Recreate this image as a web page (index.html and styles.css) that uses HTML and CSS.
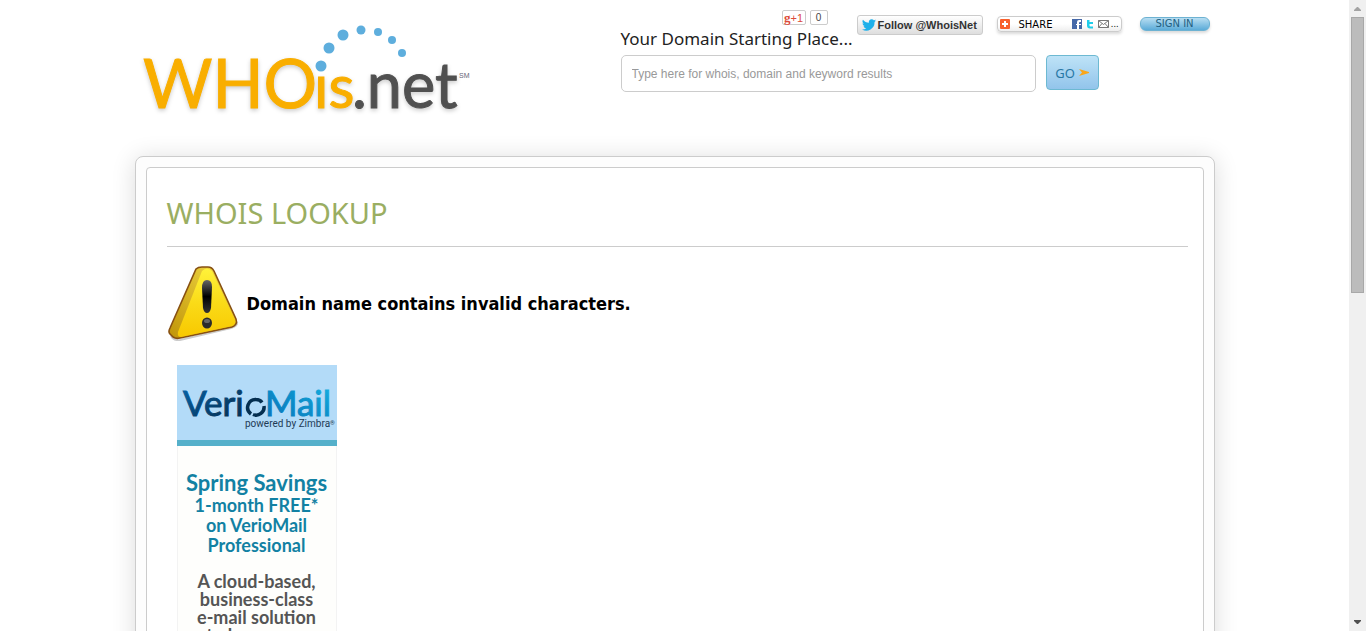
FILE: index.html
```html
<!DOCTYPE html>
<html lang="en">
<head>
<meta charset="utf-8">
<title>WHOis.net - Whois Lookup</title>
<link rel="stylesheet" href="styles.css">
</head>
<body>
<div class="shell">
  <div class="page">
    <div class="wrap">
      <header class="header">
        <a class="logo" href="#" aria-label="WHOis.net">
          <svg width="340" height="104" viewBox="0 0 340 104">
            <g class="logo-text">
              <g class="logo-gold">
                <text x="8" y="87" font-size="67">WHO</text>
                <text x="179" y="87" font-size="60">ıs</text>
              </g>
              <g class="logo-grey">
                <text x="217" y="87" font-size="63">.net</text>
              </g>
            </g>
            <text class="logo-mark" x="324" y="57">SM</text>
            <g fill="#5eaedd">
              <circle cx="186" cy="45" r="5.5"/>
              <circle cx="194" cy="27" r="5.5"/>
              <circle cx="208" cy="14" r="5.5"/>
              <circle cx="226" cy="9" r="4.5"/>
              <circle cx="243" cy="11" r="4"/>
              <circle cx="257" cy="19" r="4"/>
              <circle cx="267" cy="32" r="4"/>
            </g>
          </svg>
        </a>
        <div class="tools">
          <div class="top">
            <div class="intro">
              <div class="plus">
                <button class="plus-btn" type="button"><b>g</b>+1</button>
                <span class="plus-count">0</span>
              </div>
              <label class="tagline" for="q">Your Domain Starting Place...</label>
            </div>
            <a class="follow" href="#">
              <svg width="14" height="12" viewBox="0 0 24 20"><path fill="#1eb0ea" d="M24 2.4c-.9.4-1.800.7-2.800.8 1-.6 1.800-1.600 2.200-2.700-1 .6-2 1-3.100 1.200A4.900 4.900 0 0 0 11.900 6.200C7.800 6 4.200 4 1.700 1a4.900 4.900 0 0 0 1.500 6.600c-.8 0-1.600-.2-2.200-.6 0 2.300 1.500 4.400 3.900 4.900-.7.200-1.500.2-2.200.1.600 2 2.400 3.400 4.600 3.400A9.900 9.900 0 0 1 0 17.500 14 14 0 0 0 21.500 5c1-.7 1.800-1.600 2.500-2.600z"/></svg>
              <span>Follow @WhoisNet</span>
            </a>
            <a class="share" href="#">
              <svg width="10" height="10" viewBox="0 0 10 10"><rect width="10" height="10" rx="1" fill="#f8602c"/><path d="M4 2h2v2h2v2H6v2H4V6H2V4h2z" fill="#fff"/></svg>
              <span class="share-label">SHARE</span>
              <svg width="10" height="10" viewBox="0 0 10 10"><rect width="10" height="10" fill="#4568a8"/><path d="M5 10V6H4V5h1V3q0-2 2-2h2v2H8Q7 3 7 4v1h2v1H7v4z" fill="#fff"/></svg>
              <svg width="8" height="10" viewBox="0 0 8 10"><path d="M1 1h2.500v2H7v2H3.500v1.500q0 1 1 1H7v2H4q-3 0-3-3z" fill="#1ecdea"/></svg>
              <svg width="11" height="8" viewBox="0 0 11 8"><path d="M.5.5h10v7H.5zM.5.5l5 4 5-4M.5 7.500l3.500-4m6.500 4L7 3.500" fill="#fff" stroke="#777"/></svg>
              <span class="share-more">...</span>
            </a>
            <button class="signin" type="button">SIGN IN</button>
          </div>
          <form class="search">
            <input id="q" class="query" type="text" placeholder="Type here for whois, domain and keyword results">
            <button class="go" type="button">GO
              <svg width="10" height="7" viewBox="0 0 10 7"><path d="M0 0l10 3v1L0 7l3-3.500z" fill="#f9a61a"/></svg>
            </button>
          </form>
        </div>
      </header>
      <main class="frame">
        <div class="panel">
          <h1 class="title">WHOIS LOOKUP</h1>
          <div class="alert">
            <svg width="72" height="76" viewBox="0 0 72 76">
              <defs>
                <linearGradient id="face" x1="0" y1="0" x2="0" y2="1"><stop offset="0" stop-color="#fff23a"/><stop offset=".5" stop-color="#fadb18"/><stop offset="1" stop-color="#f8c800"/></linearGradient>
                <linearGradient id="edge" x1="1" y1="0" x2="0" y2="1"><stop offset="0" stop-color="#f4dc48"/><stop offset="1" stop-color="#c09408"/></linearGradient>
                <linearGradient id="mark" x1="0" y1="0" x2="0" y2="1"><stop offset="0" stop-color="#666"/><stop offset=".5" stop-color="#000"/><stop offset="1" stop-color="#333"/></linearGradient>
              </defs>
              <path d="M4 71q3 5 9 4l51-12q7-2 6-6" fill="none" stroke="#000" stroke-opacity=".2" stroke-width="2"/>
              <path d="M29 4Q31 2 35 2h6q4 0 6 4l22 48q2 6-4 8L13 73q-4 1-7-1l-3-3q-2-2 0-6z" fill="url(#edge)" stroke="#875012" stroke-width="1.600"/>
              <path d="M35 6q5-5 10 0l23 49q1 4-3 6L14 72q-4 0-3-5z" fill="url(#face)"/>
              <path d="M40 15q5 0 5 7l-1 21q-1 5-4 5t-4-5l-1-20q0-8 5-8z" fill="url(#mark)"/>
              <ellipse cx="40" cy="58" rx="5" ry="5.500" fill="#2b2b2b"/>
              <ellipse cx="40" cy="56" rx="3" ry="2" fill="#666"/>
            </svg>
            <strong class="message">Domain name contains invalid characters.</strong>
          </div>
          <a class="promo" href="#">
            <span class="promo-head">
              <svg width="158" height="73" viewBox="0 0 158 73">
                <defs>
                  <linearGradient id="verio" x1="0" y1="0" x2="1" y2="1"><stop offset="0" stop-color="#0568ae"/><stop offset=".6" stop-color="#063f6c"/><stop offset="1" stop-color="#052a49"/></linearGradient>
                  <linearGradient id="mail" x1="0" y1="1" x2="1" y2="0"><stop offset="0" stop-color="#0872b8"/><stop offset=".6" stop-color="#0d94cd"/><stop offset="1" stop-color="#17b5e4"/></linearGradient>
                </defs>
                <text class="promo-logo" x="5" y="50" fill="url(#verio)" stroke="url(#verio)">Veri</text>
                <g fill="none" stroke="#052f50" stroke-width="3.500"><path d="M73 48a8 8 0 0 1 5-14.500q4 0 6 3"/><path d="M86 40a8 8 0 0 1-11 8.500"/></g>
                <text class="promo-logo" x="87" y="50" fill="url(#mail)" stroke="url(#mail)">Mail</text>
                <text class="promo-by" x="67" y="61">powered by Zimbra<tspan font-size="6" dy="-2">®</tspan></text>
              </svg>
            </span>
            <span class="promo-lead">Spring Savings</span>
            <span class="promo-offer">1-month FREE*<br>on VerioMail<br>Professional</span>
            <span class="promo-copy">A cloud-based,<br>business-class<br>e-mail solution<br>to keep your</span>
          </a>
        </div>
      </main>
    </div>
  </div>
  <div class="scroll">
    <svg width="7" height="4" viewBox="0 0 7 4"><path d="M3 0h1l3 3v1H0V3z" fill="#a3a3a3"/></svg>
    <div class="track"><div class="thumb"></div></div>
    <svg width="7" height="4" viewBox="0 0 7 4"><path d="M0 0h7v1L4 4H3L0 1z" fill="#505050"/></svg>
  </div>
</div>
</body>
</html>
```
FILE: styles.css
```css
* { box-sizing: border-box; }
body { margin: 0; background: #fff; font-family: "Noto Sans", sans-serif; }
a { color: inherit; text-decoration: none; }
button { font: inherit; padding: 0; cursor: pointer; }
svg { display: block; flex: none; }

.shell { display: flex; height: 100vh; overflow: hidden; }
.page { flex: 1; min-width: 0; overflow: hidden; }
.wrap { max-width: 1080px; margin: 0 auto; }

.header { display: flex; justify-content: space-between; height: 156px; }
.logo { padding-top: 21px; }
.logo-text { font-family: Lato, sans-serif; filter: drop-shadow(0 2px 2px rgba(0, 0, 0, .2)); }
.logo-gold { fill: #f9ae00; stroke: #f9ae00; stroke-width: 1px; }
.logo-grey { fill: #505050; stroke: #505050; stroke-width: 1px; }
.logo-mark { font: 7px "Liberation Sans", sans-serif; fill: #667; }

.tools { width: 594px; }
.top { display: flex; align-items: flex-start; padding-top: 10px; }
.intro { width: 236px; }
.plus { display: flex; justify-content: flex-end; gap: 4px; padding-right: 29px; }
.plus-btn { width: 24px; height: 15px; border: 1px solid #ccc; border-radius: 2px; background: #fff; color: #dd4b39; font: 11px/12px "Liberation Sans", sans-serif; }
.plus-btn b { font-family: "Liberation Serif", serif; font-size: 13px; }
.plus-count { width: 18px; height: 15px; border: 1px solid #ccc; border-radius: 2px; color: #444; font: 10px/13px "Liberation Sans", sans-serif; text-align: center; }
.tagline { display: block; margin-top: 2px; color: #222; font-size: 17px; line-height: 24px; white-space: nowrap; }
.follow { display: flex; align-items: center; gap: 2px; width: 126px; height: 20px; margin-top: 5px; padding-left: 4px; border: 1px solid #ccc; border-radius: 3px; background: linear-gradient(#fff, #dedede); color: #333; font: bold 11px "Liberation Sans", sans-serif; white-space: nowrap; }
.share { display: flex; align-items: center; width: 125px; height: 16px; margin: 6px 0 0 14px; padding: 0 2px; border: 1px solid #ccc; border-radius: 4px; background: linear-gradient(#fff 50%, #eee); box-shadow: 0 2px 3px rgba(0, 0, 0, .15); color: #000; font: 10px "DejaVu Sans", sans-serif; gap: 4px; }
.share-label { flex: 1; padding-left: 5px; }
.share-more { font-size: 8px; margin-left: -2px; }
.signin { width: 70px; height: 14px; margin: 7px 0 0 18px; border: 1px solid #6db2d2; border-radius: 6px; background: linear-gradient(#b8def2, #5babd8); box-shadow: 0 2px 3px rgba(0, 0, 0, .15); color: #235f80; font: 10px/12px "DejaVu Sans", sans-serif; }
.search { display: flex; gap: 10px; padding-top: 4px; }
.query { width: 415px; height: 37px; padding: 0 10px; border: 1px solid #ccc; border-radius: 5px; color: #333; font: 12px "Liberation Sans", sans-serif; }
.query::placeholder { color: #999; opacity: 1; }
.go { display: flex; align-items: center; justify-content: center; gap: 4px; width: 53px; height: 35px; border: 1px solid #6db9d2; border-radius: 4px; background: linear-gradient(#bee3f7, #92c4eb); color: #2878a5; font-size: 13px; }

.frame { padding: 10px; min-height: 800px; border: 1px solid #ccc; border-radius: 8px; background: #fdfdfd; box-shadow: 0 2px 24px rgba(0, 0, 0, .14); }
.panel { min-height: 780px; padding: 0 15px 0 20px; border: 1px solid #ccc; border-radius: 4px; background: #fff; }
.title { margin: 0; padding: 25px 0 13px; border-bottom: 1px solid #ccc; color: #9aae62; font-size: 29px; font-weight: 400; line-height: 40px; }
.alert { display: flex; align-items: center; gap: 8px; padding-top: 18px; }
.message { color: #000; font: bold 18px "DejaVu Sans Condensed", "DejaVu Sans", sans-serif; }
.promo { display: block; width: 160px; margin: 24px 0 0 10px; border: 1px solid #f3f3f3; border-top: 0; background: #fefefc; font-family: Lato, sans-serif; font-weight: 700; text-align: center; }
.promo span { display: block; }
.promo .promo-head { margin: 0 -1px; padding: 1px; border-bottom: 6px solid #55b0ca; background: #b3dbf8; }
.promo-logo { font: 35px Lato, sans-serif; stroke-width: 1px; }
.promo-by { font: 10px Roboto, sans-serif; fill: #1d3a55; }
.promo-lead { padding-top: 25px; color: #1281a3; font-size: 22px; line-height: 24px; }
.promo-offer { color: #1281a3; font-size: 18px; line-height: 20px; }
.promo-copy { padding: 17px 0 30px; color: #555; font-size: 18px; line-height: 18px; }

.scroll { display: flex; flex-direction: column; align-items: center; justify-content: space-between; flex: none; width: 17px; padding: 7px 0; background: #f0f0f0; }
.track { flex: 1; width: 13px; padding-top: 6px; }
.thumb { height: 276px; border: 1px solid #a8a8a8; background: #bcbcbc; }
```
